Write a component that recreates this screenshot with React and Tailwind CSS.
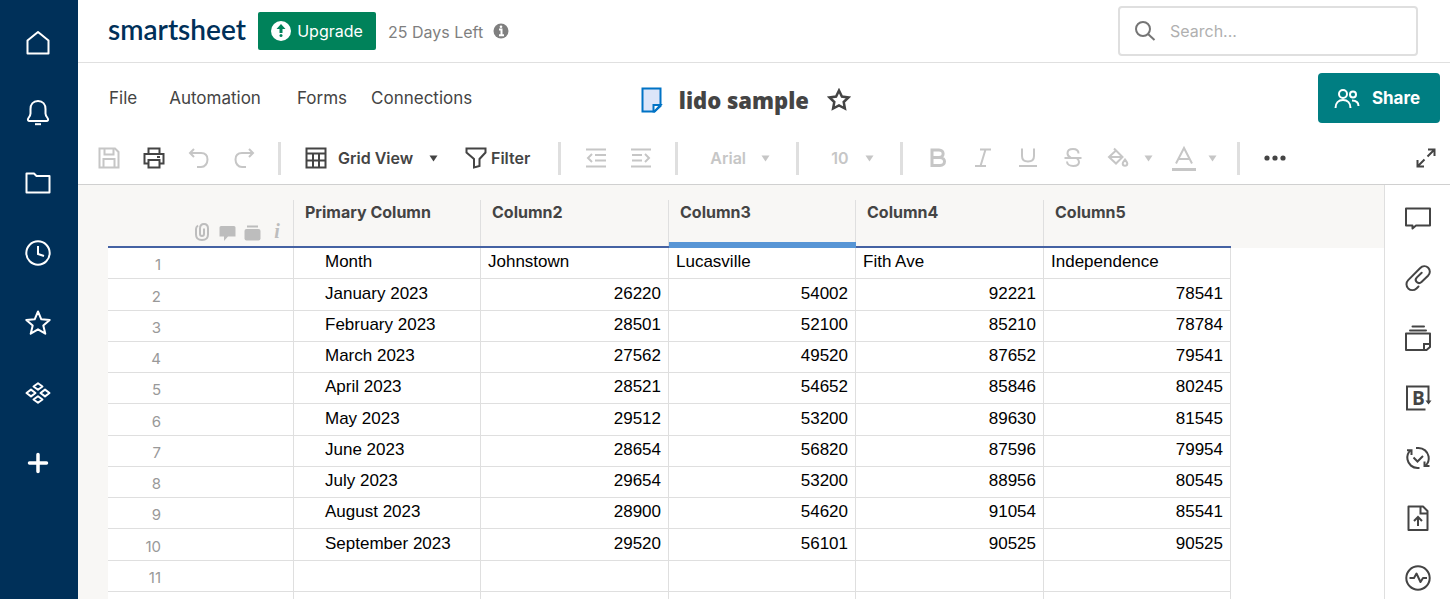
import React, { useState } from 'react';

const columns = ['Primary Column', 'Column2', 'Column3', 'Column4', 'Column5'];

const rows = [
    ['Month', 'Johnstown', 'Lucasville', 'Fith Ave', 'Independence'],
    ['January 2023', '26220', '54002', '92221', '78541'],
    ['February 2023', '28501', '52100', '85210', '78784'],
    ['March 2023', '27562', '49520', '87652', '79541'],
    ['April 2023', '28521', '54652', '85846', '80245'],
    ['May 2023', '29512', '53200', '89630', '81545'],
    ['June 2023', '28654', '56820', '87596', '79954'],
    ['July 2023', '29654', '53200', '88956', '80545'],
    ['August 2023', '28900', '54620', '91054', '85541'],
    ['September 2023', '29520', '56101', '90525', '90525'],
    ['', '', '', '', ''],
];

function Icon({ size = 28, width = 2, className = '', children }) {
    return (
        <svg
            width={size}
            height={size}
            viewBox={`0 0 ${size} ${size}`}
            fill="none"
            stroke="currentColor"
            strokeWidth={width}
            className={`shrink-0 ${className}`}
            aria-hidden="true"
        >
            {children}
        </svg>
    );
}

const sideItems = [
    { name: 'Home', icon: <path d="M3.5 11.5 14 3l10.500 8.500v13h-21z" strokeLinejoin="round" /> },
    {
        name: 'Notifications',
        icon: (
            <>
                <path d="M14 2c-5 0-7.500 3.500-7.500 8v4.500c0 2-.8 3-2 4.500-1.200 1.600-.6 3 1.200 3h16.600c1.800 0 2.400-1.400 1.200-3-1.200-1.500-2-2.500-2-4.500V10c0-4.500-2.500-8-7.500-8z" />
                <path d="M11 25.200h6" />
            </>
        ),
    },
    { name: 'Browse', icon: <path d="M2.500 4.500h7.500l2.500 2.500h13v16.500h-23z" strokeLinejoin="round" /> },
    {
        name: 'Recents',
        icon: (
            <>
                <circle cx="14" cy="14" r="11.700" />
                <path d="M14 7v8l6 2" />
            </>
        ),
    },
    {
        name: 'Favorites',
        icon: <path d="m14 2.500 3.300 7.800 8.400.7-6.400 5.500 2 8.200-7.300-4.400-7.300 4.400 2-8.200L2.300 11l8.400-.7z" strokeLinejoin="round" />,
    },
    {
        name: 'Solution Center',
        icon: (
            <>
                <path d="m14 4.300 4.500 3.200-4.500 3.200-4.500-3.200z" strokeLinejoin="round" />
                <path d="m14 17.300 4.500 3.200-4.500 3.200-4.500-3.200z" strokeLinejoin="round" />
                <path d="m7 10.600 4.500 3.400L7 17.400 2.500 14z" strokeLinejoin="round" />
                <path d="m21 10.600 4.500 3.400-4.500 3.400-4.500-3.400z" strokeLinejoin="round" />
            </>
        ),
    },
    { name: 'Create', icon: <path d="M14 5.500v17M5.500 14h17" strokeWidth="3.500" strokeLinecap="round" /> },
];

const railItems = [
    { name: 'Conversations', icon: <path d="M2 4.500h24v17H12l-3.500 3v-3H2z" strokeLinejoin="round" /> },
    {
        name: 'Attachments',
        icon: (
            <path
                d="M14.500 22.500l-2 1.900c-2.500 2.300-6 2.100-8.300 0-2.300-2.300-2.300-6 0-8.300L16 4.200c2.500-2.500 6-2.500 8.200-.4 2.200 2.200 2.200 5.600-.2 8l-6.500 6.200c-1.500 1.400-3.500 1.300-4.800.1-1.300-1.300-1.200-3.300.2-4.700l4.800-4.600"
                strokeLinecap="round"
            />
        ),
    },
    {
        name: 'Proofs',
        icon: (
            <>
                <path d="M8.500 2.500h11.500M6 6.500h16" strokeLinecap="round" />
                <path d="M2 9.500h24v13.500l-3.500 3H2z" strokeLinejoin="round" />
                <path d="M20 26v-6h6" />
            </>
        ),
    },
    {
        name: 'Update Requests',
        icon: (
            <>
                <path d="M21.500 25.500H3v-23h21.500V19" />
                <path d="M21.500 16.500h6l-3 4z" fill="currentColor" stroke="none" />
                <text x="8" y="20.500" fontSize="19" fontWeight="700" fill="currentColor" stroke="none" className="font-['Open_Sans',sans-serif]">B</text>
            </>
        ),
    },
    {
        name: 'Activity Status',
        icon: (
            <>
                <path d="M6.500 6.500C3.500 9 3 12.500 3.500 15.500c.9 5 5 8.500 10 8.500h2" />
                <path d="M21.500 21.500c3-2.500 3.600-6 3.100-9C23.700 7.500 19.500 4 14.500 4H12" />
                <path d="M3 6.200h4.500V11M25.500 22H20.500v-4.500M9.500 13.500l4 4 5.500-5.500" />
            </>
        ),
    },
    {
        name: 'Publish',
        icon: (
            <>
                <path d="M4.500 2.500h14.500l4.500 4.500V26h-19z" strokeLinejoin="round" />
                <path d="M16.500 2.500v7h7M14 22v-8M10 17l4-4 4 4" />
            </>
        ),
    },
    {
        name: 'Activity Log',
        icon: (
            <>
                <circle cx="14" cy="14" r="11.700" />
                <path d="M5.500 14h4.500l2.500-4.500 4 8.500 2.500-4h4" strokeLinejoin="round" />
            </>
        ),
    },
];

function Divider({ className = '' }) {
    return <span className={`h-[33px] w-[3px] shrink-0 bg-[#dfdfdf] ${className}`} />;
}

function Caret() {
    return (
        <svg width="9" height="7" viewBox="0 0 9 7" fill="currentColor" className="pointer-events-none shrink-0" aria-hidden="true">
            <path d="M.500.500h8L4.500 6.500z" />
        </svg>
    );
}

function ToolButton({ label, children, className = '' }) {
    return (
        <button type="button" aria-label={label} className={`flex h-10 w-[45px] shrink-0 items-center justify-center ${className}`}>
            {children}
        </button>
    );
}

// Native select with our own arrow drawn on top of its right edge
function ToolSelect({ label, options, className = '' }) {
    return (
        <div className={`relative flex shrink-0 items-center ${className}`}>
            <select aria-label={label} className="h-8 w-full appearance-none bg-transparent text-base font-semibold outline-none">
                {options.map(o => <option key={o}>{o}</option>)}
            </select>
            <span className="pointer-events-none absolute right-0"><Caret /></span>
        </div>
    );
}

function Sidebar() {
    return (
        <nav className="flex w-[78px] shrink-0 flex-col bg-[#003059] pt-2 text-white">
            {sideItems.map(item => (
                <button key={item.name} type="button" aria-label={item.name} className="flex h-[70px] shrink-0 items-center justify-center pr-0.5">
                    <Icon>{item.icon}</Icon>
                </button>
            ))}
        </nav>
    );
}

function TopBar() {
    const [query, setQuery] = useState('');

    return (
        <header className="flex h-[63px] shrink-0 items-center border-b border-[#e0e0e0] pr-8 pl-[30px]">
            <a href="#" className="w-[150px] shrink-0 pb-1 font-['Lato',sans-serif] text-[28px] leading-8 font-semibold text-[#003059]">smartsheet</a>
            <button type="button" className="flex h-[38px] w-[118px] shrink-0 items-center justify-center gap-1.5 rounded-xs bg-[#00825a] text-base text-white">
                <Icon size={20} className="text-[#00825a]">
                    <circle cx="10" cy="10" r="10" fill="#fff" stroke="none" />
                    <path d="M10 3l4.500 5h-3v4h-3V8h-3z" fill="currentColor" stroke="none" />
                    <circle cx="10" cy="14.500" r="1.500" fill="currentColor" stroke="none" />
                </Icon>
                Upgrade
            </button>
            <span className="ml-3 pt-0.5 text-base text-[#7f7f7f]">25 Days Left</span>
            <Icon size={16} className="ml-2.5 text-[#7f7f7f]">
                <circle cx="8" cy="8" r="7.500" fill="currentColor" stroke="none" />
                <path d="M6 6.500h2.500V12M6 12.200h5" stroke="#fff" />
                <circle cx="8" cy="3.700" r="1.300" fill="#fff" stroke="none" />
            </Icon>
            <div className="ml-auto flex h-[50px] w-[300px] items-center gap-3.5 rounded border-2 border-[#dfdfdf] px-3.5">
                <Icon size={22} width={2} className="text-[#757575]">
                    <circle cx="9" cy="9" r="7" />
                    <path d="m14 14 6.500 6" />
                </Icon>
                <input
                    type="text"
                    aria-label="Search"
                    value={query}
                    onChange={e => setQuery(e.target.value)}
                    placeholder="Search..."
                    className="w-full min-w-0 text-base outline-none placeholder:text-[#b0b0b0]"
                />
            </div>
        </header>
    );
}

function MenuBar() {
    return (
        <div className="flex h-[69px] shrink-0 items-center pr-2.5 pl-[30px]">
            <nav className="flex w-2/5 pt-0.5 pl-px text-[17px] text-[#444]">
                <button type="button" className="mr-8">File</button>
                <button type="button" className="mr-9">Automation</button>
                <button type="button" className="mr-6">Forms</button>
                <button type="button">Connections</button>
            </nav>
            <div className="flex items-center pt-1 text-[#444]">
                <Icon size={26} className="text-[#0073c5]">
                    <path d="M1.500 1.500h18V19l-6 5.500h-12z" fill="#dbe5f9" />
                    <path d="M12.500 24.500v-6.500h7L13.500 24.500z" fill="#fff" />
                </Icon>
                <h1 className="ml-3 font-['Open_Sans',sans-serif] text-[22px] leading-7 font-extrabold">lido sample</h1>
                <button type="button" aria-label="Add to favorites" className="ml-[18px]">
                    <Icon size={24}>
                        <path strokeWidth="2.500" d="m12 2.500 2.900 6 6.600.9-4.800 4.600 1.200 6.500-5.900-3.100-5.900 3.100L7.300 14 2.500 9.400l6.600-.9z" />
                    </Icon>
                </button>
            </div>
            <button type="button" className="ml-auto flex h-[50px] w-[122px] items-center justify-center gap-3 rounded bg-[#007e82] pt-0.5 pr-1 text-[17px] font-bold text-white">
                <Icon size={26} width={2}>
                    <circle cx="9" cy="8" r="4" />
                    <path d="M1.500 22c0-5 3-8 7.500-8s7.500 3 7.500 8" />
                    <circle cx="19" cy="8.500" r="3" />
                    <path d="M18 14.500c4 0 6.500 2 6.500 5.500" />
                </Icon>
                Share
            </button>
        </div>
    );
}

function Toolbar() {
    return (
        <div className="flex h-[53px] shrink-0 items-center border-b border-[#d0d0d0] pl-2 text-[#c6c6c6]">
            <ToolButton label="Save">
                <Icon size={22} width={2}>
                    <path d="M1.500 1.500h15.500l3.500 3.500v15.500h-19z" />
                    <path d="M6.500 2v5.500h9V2M5.500 20.500v-8.500h11v8.500" />
                </Icon>
            </ToolButton>
            <ToolButton label="Print" className="text-[#444]">
                <Icon size={22} width={2}>
                    <path d="M5.500 6.500v-5h11v5M5.500 16.500h-4v-9.500h19v9.500h-4" />
                    <path d="M5.500 13h11v7.500h-11zM14 10h3" />
                </Icon>
            </ToolButton>
            <ToolButton label="Undo">
                <Icon size={22} width={2}>
                    <path d="M6 2 2 6l4 4M2 6h11c4 0 6.500 2.500 6.500 6.500S17 20 13 20H9" />
                </Icon>
            </ToolButton>
            <ToolButton label="Redo">
                <Icon size={22} width={2}>
                    <path d="m16 2 4 4-4 4M20 6H9c-4 0-6.500 2.500-6.500 6.500S5 20 9 20h4" />
                </Icon>
            </ToolButton>
            <Divider className="mr-6 ml-3" />
            <Icon size={22} width={2} className="text-[#444]">
                <path d="M1.500 1.500h19v19h-19zM1.500 6.500h19M1.500 13.500h19M8 6.500v14M14 6.500v14" />
            </Icon>
            <ToolSelect label="View" options={['Grid View', 'Gantt View', 'Card View']} className="ml-[11px] w-[100px] text-[#444]" />
            <button type="button" className="ml-[27px] flex shrink-0 items-center gap-1 text-base font-semibold text-[#444]">
                <Icon size={22} width={2}>
                    <path d="M1.500 1.500h19v4l-6 6.500v7l-5.500 1.500V12L1.500 5.500z" />
                </Icon>
                Filter
            </button>
            <Divider className="mr-3 ml-7" />
            <ToolButton label="Outdent">
                <Icon size={22} width={2}>
                    <path d="M1 2.500h20M1 19.500h20M10 8h11M10 13.500h11M7 7l-4 4 4 4" />
                </Icon>
            </ToolButton>
            <ToolButton label="Indent">
                <Icon size={22} width={2}>
                    <path d="M1 2.500h20M1 19.500h20M2 8h10M2 13.500h10M15 7l4 4-4 4" />
                </Icon>
            </ToolButton>
            <Divider className="mr-8 ml-3" />
            <ToolSelect label="Font" options={['Arial', 'Tahoma', 'Verdana']} className="w-[60px]" />
            <Divider className="mr-8 ml-[26px]" />
            <ToolSelect label="Font size" options={['10', '12', '14']} className="w-[43px]" />
            <Divider className="mr-3 ml-[26px]" />
            <ToolButton label="Bold">
                <Icon size={22} width={3}>
                    <path d="M5 3h7c5.500 0 5.500 7.500 0 7.500H5zM5 10.500h8c6 0 6 8 0 8H5z" />
                </Icon>
            </ToolButton>
            <ToolButton label="Italic">
                <Icon size={22} width={2}>
                    <path d="M8 2.500h11M3 19h11M13.500 2.500l-5 16.500" />
                </Icon>
            </ToolButton>
            <ToolButton label="Underline">
                <Icon size={22} width={2}>
                    <path d="M5 1.500v7.500c0 3.500 2.500 5.500 6 5.500s6-2 6-5.500V1.500M2 19h18" />
                </Icon>
            </ToolButton>
            <ToolButton label="Strikethrough">
                <Icon size={22} width={2}>
                    <path d="M16.500 6.500c0-2.500-2-4.500-5.500-4.500-3.500 0-5.500 1.800-5.500 4.200S7 10 9 11M2.500 11h17M15 11.500c1.200.8 2 2 2 3.500 0 2.500-2.500 4-5.800 4-3.500 0-6.200-1.700-6.200-4.500" />
                </Icon>
            </ToolButton>
            <ToolButton label="Fill color">
                <Icon size={22} width={2}>
                    <path d="M7 1.500 15.500 10l-6.500 6.500L2 10l7-6.500M2.500 10h12.500" />
                    <path d="M18 12.500c1.500 2 2.300 3 2.300 4a2.300 2.300 0 0 1-4.600 0c0-1 .8-2 2.300-4z" />
                </Icon>
            </ToolButton>
            <button type="button" aria-label="Fill color options" className="ml-1"><Caret /></button>
            <ToolButton label="Font color" className="ml-2">
                <Icon size={26} width={2}>
                    <path d="M5 18.500 13 3l8 15.500M8 14h10" />
                    <path d="M1 24.500h24" strokeWidth="3" />
                </Icon>
            </ToolButton>
            <button type="button" aria-label="Font color options" className="ml-0.5"><Caret /></button>
            <Divider className="mr-6 ml-5" />
            <button type="button" aria-label="More" className="text-[#444]">
                <Icon size={22}>
                    <g fill="currentColor" stroke="none">
                        <circle cx="3" cy="11" r="2.600" />
                        <circle cx="11" cy="11" r="2.600" />
                        <circle cx="19" cy="11" r="2.600" />
                    </g>
                </Icon>
            </button>
            <button type="button" aria-label="Full screen" className="mr-3.5 ml-auto text-[#444]">
                <Icon size={20} width={2}>
                    <path d="M12 1.500h6.500V8M18.500 1.500l-7 7M1.500 12v6.500H8M1.500 18.500l7-7" />
                </Icon>
            </button>
        </div>
    );
}

function RowIndicators() {
    return (
        <div className="flex h-full items-end justify-end gap-2 pr-2 pb-[5px] text-[#bdbdbd]">
            <Icon size={18} width={2}>
                <path d="M5 2.500C3.500 3.500 3 4.500 3 6v5.500C3 15 5 17 9 17s6-2 6-5.500V5.500C15 3 13.500 1 11 1S7 3 7 5.500V11c0 2.700 4 2.700 4 0V5.500" />
            </Icon>
            <Icon size={17}>
                <path d="M2 2h13a1.500 1.500 0 0 1 1.500 1.500v9H9L5 17v-4.500H.5v-9A1.500 1.500 0 0 1 2 2z" fill="currentColor" stroke="none" />
            </Icon>
            <Icon size={17}>
                <path d="M3 2.500h11" />
                <rect x=".5" y="5" width="16" height="11.500" rx="2" fill="currentColor" stroke="none" />
            </Icon>
            <span className="w-4 text-center font-['Liberation_Serif',serif] text-xl leading-5 font-bold italic">i</span>
        </div>
    );
}

function Sheet() {
    const selected = 2;

    return (
        <div className="min-w-0 flex-1 overflow-hidden bg-[#f8f7f5] pl-[30px]">
            <table className="w-full table-fixed border-separate border-spacing-0 bg-white">
                <colgroup>
                    <col className="w-[186px]" />
                    <col className="w-[187px]" />
                    <col className="w-[188px]" />
                    <col className="w-[187px]" />
                    <col className="w-[188px]" />
                    <col className="w-[187px]" />
                    <col />
                </colgroup>
                <thead>
                    <tr className="bg-[#f8f7f5] text-left text-base text-[#444]">
                        <td className="h-[63px] border-b-2 border-[#4562a3] p-0 pt-[15px]">
                            <div className="h-[46px] border-r border-[#dfdfdf]"><RowIndicators /></div>
                        </td>
                        {columns.map((name, i) => (
                            <th
                                key={name}
                                scope="col"
                                className={`h-[63px] p-0 pt-[15px] font-bold ${i === selected ? 'border-b-[6px] border-[#5795d5]' : 'border-b-2 border-[#4562a3]'}`}
                            >
                                <div className={`pl-[11px] ${i === selected ? 'h-[42px]' : 'h-[46px]'} ${i === columns.length - 1 ? '' : 'border-r border-[#dfdfdf]'}`}>
                                    {name}
                                </div>
                            </th>
                        ))}
                        <td className="p-0" />
                    </tr>
                </thead>
                <tbody>
                    {rows.map((row, r) => (
                        <tr key={r} className={r % 4 === 1 ? 'h-8' : 'h-[31px]'}>
                            <th scope="row" className="border-r border-b border-[#dfdfdf] p-0 pt-1 pr-[132px] text-right text-[15px] leading-5 font-normal text-[#999]">
                                {r + 1}
                            </th>
                            {row.map((value, c) => (
                                <td
                                    key={c}
                                    className={`border-r border-b border-[#dfdfdf] p-0 pb-0.5 font-['Liberation_Sans',Arial,sans-serif] text-[17px] leading-5 text-black ${c === 0 ? 'pl-[31px]' : r === 0 ? 'pl-[7px]' : 'pr-[7px] text-right'}`}
                                >
                                    {value}
                                </td>
                            ))}
                            <td className="p-0" />
                        </tr>
                    ))}
                    <tr className="h-8">
                        {Array.from({ length: 6 }, (_, c) => (
                            <td key={c} className="border-r border-[#dfdfdf] p-0" />
                        ))}
                        <td className="p-0" />
                    </tr>
                </tbody>
            </table>
        </div>
    );
}

function Rail() {
    return (
        <aside className="flex w-[66px] shrink-0 flex-col overflow-hidden border-l border-[#dfdfdf] bg-white pt-[3px] text-[#444]">
            {railItems.map(item => (
                <button key={item.name} type="button" aria-label={item.name} className="flex h-[60px] shrink-0 items-center justify-center">
                    <Icon>{item.icon}</Icon>
                </button>
            ))}
        </aside>
    );
}

export default function App() {
    return (
        <div className="flex h-screen overflow-hidden bg-white font-['Inter',sans-serif]">
            <Sidebar />
            <main className="flex min-w-0 flex-1 flex-col">
                <TopBar />
                <MenuBar />
                <Toolbar />
                <div className="flex min-h-0 flex-1">
                    <Sheet />
                    <Rail />
                </div>
            </main>
        </div>
    );
}
